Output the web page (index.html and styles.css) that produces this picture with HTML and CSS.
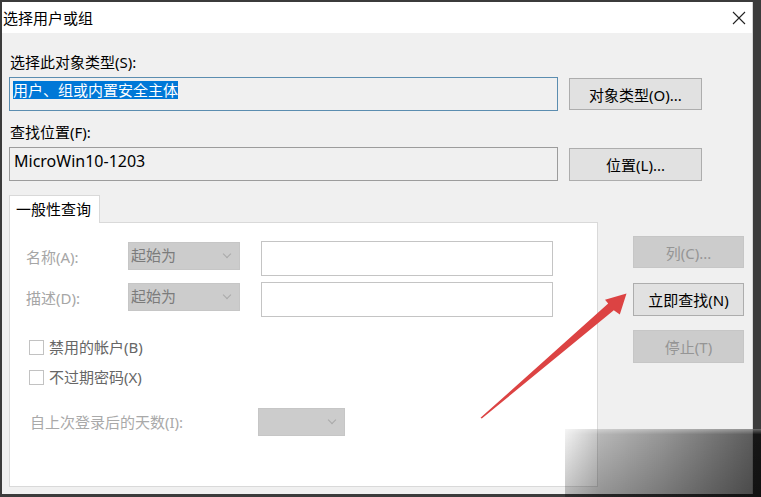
FILE: index.html
```html
<!DOCTYPE html>
<html lang="zh-CN">
<head>
    <meta charset="UTF-8">
    <meta name="viewport" content="width=device-width, initial-scale=1.0">
    <title>选择用户或组</title>
    <link rel="stylesheet" href="styles.css">
</head>
<body>

<div class="window">
    <!-- 标题栏 -->
    <div class="titlebar">
        <span class="title">选择用户或组</span>
        <svg class="close" width="14" height="14" viewBox="0 0 14 14">
            <path d="M1 1 L13 13 M13 1 L1 13" stroke="#222" stroke-width="1.1" fill="none"/>
        </svg>
    </div>

    <div class="content">
        <div class="label">选择此对象类型(S):</div>
        <div class="field-row">
            <div class="field focused"><span class="selected">用户、组或内置安全主体</span></div>
            <button class="btn">对象类型(O)...</button>
        </div>

        <div class="label second">查找位置(F):</div>
        <div class="field-row">
            <div class="field latin">MicroWin10-1203</div>
            <button class="btn tall">位置(L)...</button>
        </div>

        <div class="query">
            <div class="tabs">
                <div class="tab">一般性查询</div>
                <div class="panel">
                    <div class="qrow">
                        <span class="qlabel">名称(A):</span>
                        <div class="combo">起始为<span class="chevron"></span></div>
                        <div class="textbox"></div>
                    </div>
                    <div class="qrow next">
                        <span class="qlabel">描述(D):</span>
                        <div class="combo">起始为<span class="chevron"></span></div>
                        <div class="textbox"></div>
                    </div>

                    <label class="check first"><span class="box"></span>禁用的帐户(B)</label>
                    <label class="check"><span class="box"></span>不过期密码(X)</label>

                    <div class="days">
                        <span class="days-label">自上次登录后的天数(I):</span>
                        <div class="combo small"><span class="chevron"></span></div>
                    </div>
                </div>
            </div>

            <div class="side">
                <button class="btn side-btn" disabled>列(C)...</button>
                <button class="btn side-btn find">立即查找(N)</button>
                <button class="btn side-btn stop" disabled>停止(T)</button>
            </div>
        </div>
    </div>
</div>

<!-- 红色箭头 -->
<svg class="arrow" width="170" height="140" viewBox="470 285 170 140">
    <polygon points="480.5,417.8 608.2,303.6 605,299.8 626.5,293.5 619.8,314.5 613.8,310.3 481.8,418.6" fill="#dc4343"/>
</svg>

<div class="watermark"></div>

</body>
</html>
```

FILE: styles.css
```css
body {
    margin: 0;
    background-color: #3b3b3b;
    font-family: "Noto Sans", "Noto Sans CJK SC", sans-serif;
    font-size: 15px;
    color: #000;
}
.window {
    width: 751px;
    height: 492px;
    margin: 2px 0 0 2px;
    background-color: #f0f0f0;
    box-sizing: border-box;
    border-right: 1px solid #d4d4d4;
}
.titlebar {
    height: 31px;
    background-color: #fff;
    display: flex;
    align-items: center;
    justify-content: space-between;
    padding-left: 1px;
}
.title {
    line-height: 18px;
}
.close {
    margin-right: 6px;
}
.content {
    padding: 20px 0 0 7px;
}
.label {
    line-height: 18px;
    padding-left: 1px;
}
.label.second {
    margin-top: 12px;
}
.field-row {
    display: flex;
    align-items: flex-start;
    gap: 11px;
    margin-top: 6px;
}
.field {
    width: 549px;
    height: 34px;
    box-sizing: border-box;
    border: 1px solid #9c9c9c;
    padding: 3px 4px;
    line-height: 18px;
}
.field.latin {
    font-size: 16px;
    padding-top: 4px;
}
.field.focused {
    border-color: #5b8db0; /* 焦点边框 */
    padding-left: 3px;
}
.selected {
    background-color: #0078d7;
    color: #fff;
    display: inline-block;
    line-height: 18px;
}
.btn {
    font-family: inherit;
    font-size: 15px;
    background-color: #e1e1e1;
    border: 1px solid #adadad;
    color: #000;
    padding: 0;
    width: 133px;
    height: 32px;
    margin-top: 1px;
}
.btn.tall {
    height: 33px;
}
.btn:disabled {
    background-color: #cccccc;
    border-color: #c6c6c6;
    color: #959595;
}
.query {
    display: flex;
    margin-top: 14px;
}
.tabs {
    width: 589px;
}
.tab {
    position: relative;
    z-index: 1;
    display: inline-block;
    height: 28px;
    box-sizing: border-box;
    border: 1px solid #d9d9d9;
    border-bottom: none;
    background-color: #fff;
    padding: 0 8px 0 6px;
    line-height: 27px;
    margin-bottom: -1px;
    vertical-align: top;
}
.panel {
    height: 265px;
    box-sizing: border-box;
    border: 1px solid #d9d9d9;
    background-color: #fff;
    padding: 18px 0 0 16px;
}
.qrow {
    display: flex;
    align-items: flex-start;
}
.qrow.next {
    margin-top: 6px;
}
.qlabel {
    width: 102px;
    line-height: 32px;
    color: #a6a6a6;
}
.combo {
    position: relative;
    width: 112px;
    height: 28px;
    box-sizing: border-box;
    margin-top: 1px;
    background-color: #cccccc;
    border: 1px solid #c6c6c6;
    color: #7b7b7b;
    padding-left: 2px;
    line-height: 25px;
}
.chevron {
    position: absolute;
    right: 9px;
    top: 8px;
    width: 5px;
    height: 5px;
    border-right: 1px solid #a9a9a9;
    border-bottom: 1px solid #a9a9a9;
    transform: rotate(45deg);
}
.textbox {
    width: 292px;
    height: 35px;
    box-sizing: border-box;
    margin-left: 21px;
    border: 1px solid #c4c4c4;
    background-color: #fff;
}
.check {
    display: flex;
    align-items: center;
    height: 16px;
    margin-top: 14px;
    color: #666;
    line-height: 16px;
}
.check.first {
    margin-top: 22px;
}
.box {
    width: 15px;
    height: 15px;
    box-sizing: border-box;
    border: 1px solid #c2c2c2;
    background-color: #fff;
    margin: 0 5px 0 3px;
}
.days {
    display: flex;
    align-items: center;
    margin-top: 23px;
}
.days-label {
    width: 228px;
    margin-left: 4px;
    line-height: 28px;
    color: #a9a9a9;
}
.combo.small {
    width: 87px;
    margin-top: 0;
}
.side {
    display: flex;
    flex-direction: column;
    margin-left: 35px;
    padding-top: 41px;
}
.side-btn {
    width: 111px;
    margin-top: 0;
}
.side-btn.find {
    height: 33px;
    margin-top: 15px;
}
.side-btn.stop {
    height: 33px;
    margin-top: 14px;
}
.arrow {
    position: absolute;
    left: 470px;
    top: 285px;
    pointer-events: none;
}
.watermark {
    position: absolute;
    left: 565px;
    top: 429px;
    width: 196px;
    height: 68px;
    background:
        linear-gradient(to bottom, rgba(255, 255, 255, 0.35), rgba(0, 0, 0, 0) 8%, rgba(0, 0, 0, 0.2)),
        linear-gradient(to right, rgba(0, 0, 0, 0.06), rgba(0, 0, 0, 0.24) 18%, rgba(0, 0, 0, 0.38) 50%, rgba(0, 0, 0, 0.64));
}
```
